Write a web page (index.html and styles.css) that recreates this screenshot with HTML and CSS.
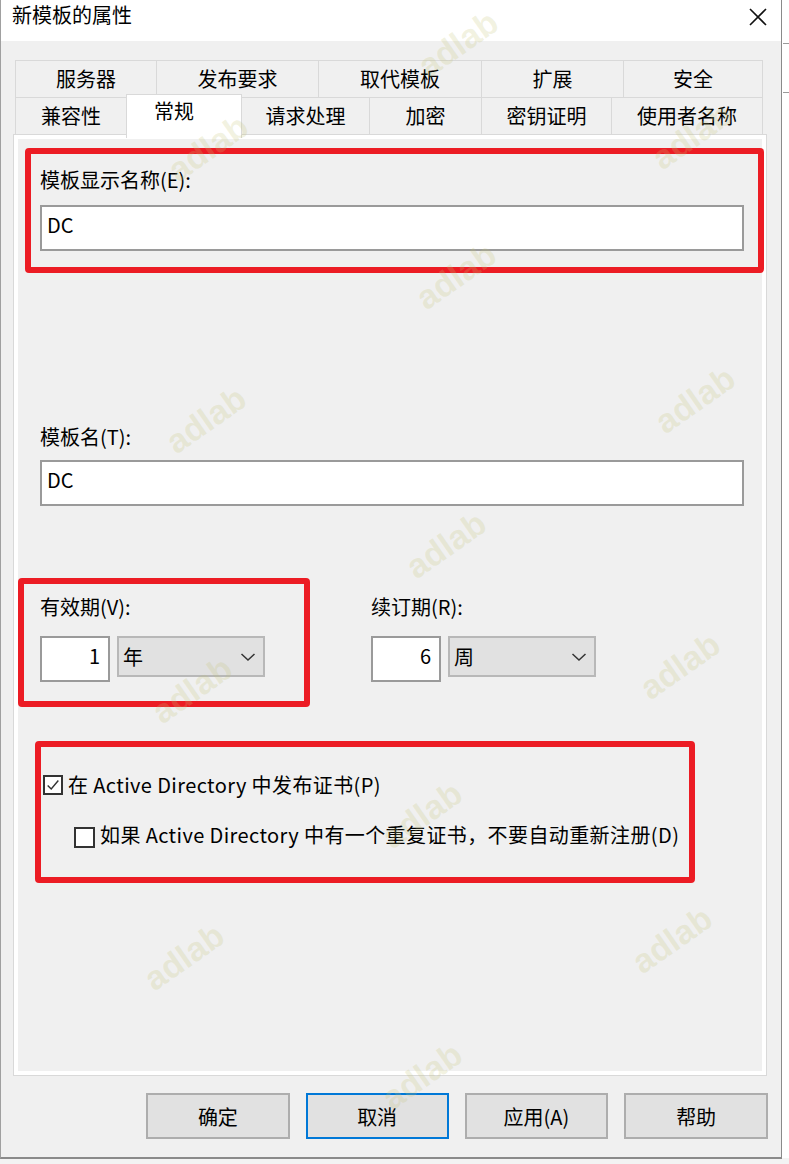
FILE: index.html
```html
<!DOCTYPE html>
<html lang="zh-CN">
<head>
<meta charset="utf-8">
<title>新模板的属性</title>
<link rel="stylesheet" href="styles.css">
</head>
<body>
<div class="screen">
  <div class="window">
    <div class="titlebar">
      <span class="title">新模板的属性</span>
      <svg class="close" width="20" height="18" viewBox="0 0 20 18"><path d="M2 1 L18 17 M18 1 L2 17" stroke="#111" stroke-width="1.6" fill="none"/></svg>
    </div>
    <div class="body">
      <div class="tabs">
        <div class="tabrow tabrow-top">
          <div class="tab">服务器</div>
          <div class="tab">发布要求</div>
          <div class="tab">取代模板</div>
          <div class="tab">扩展</div>
          <div class="tab">安全</div>
        </div>
        <div class="tabrow tabrow-bottom">
          <div class="tab">兼容性</div>
          <div class="tab tab-active">常规</div>
          <div class="tab">请求处理</div>
          <div class="tab">加密</div>
          <div class="tab">密钥证明</div>
          <div class="tab">使用者名称</div>
        </div>
      </div>
      <div class="panel">
        <div class="label label-first">模板显示名称(E):</div>
        <div class="textbox">DC</div>
        <div class="label label-second">模板名(T):</div>
        <div class="textbox textbox-second">DC</div>
        <div class="periods">
          <div class="period">
            <div class="label">有效期(V):</div>
            <div class="period-controls">
              <div class="numbox">1</div>
              <div class="combo"><span>年</span><svg width="16" height="10" viewBox="0 0 16 10"><path d="M1.5 2 L8 8 L14.5 2" stroke="#333" stroke-width="1.5" fill="none"/></svg></div>
            </div>
          </div>
          <div class="period period-right">
            <div class="label">续订期(R):</div>
            <div class="period-controls">
              <div class="numbox">6</div>
              <div class="combo"><span>周</span><svg width="16" height="10" viewBox="0 0 16 10"><path d="M1.5 2 L8 8 L14.5 2" stroke="#333" stroke-width="1.5" fill="none"/></svg></div>
            </div>
          </div>
        </div>
        <div class="check check-first">
          <span class="box"><svg width="18" height="18" viewBox="0 0 18 18"><path d="M3 9.5 L7 13.5 L15 4" stroke="#333" stroke-width="1.6" fill="none"/></svg></span>
          <span class="check-text">在 Active Directory 中发布证书(P)</span>
        </div>
        <div class="check check-second">
          <span class="box"></span>
          <span class="check-text">如果 Active Directory 中有一个重复证书，不要自动重新注册(D)</span>
        </div>
      </div>
      <div class="buttons">
        <div class="btn">确定</div>
        <div class="btn btn-focus">取消</div>
        <div class="btn">应用(A)</div>
        <div class="btn">帮助</div>
      </div>
    </div>
    <div class="redbox redbox-1"></div>
    <div class="redbox redbox-2"></div>
    <div class="redbox redbox-3"></div>
  </div>
  <div class="side">
    <div class="side-line side-line-1"></div>
    <div class="side-line side-line-2"></div>
  </div>
  <div class="watermarks">
    <span class="wm wm-1">adlab</span>
    <span class="wm wm-2">adlab</span>
    <span class="wm wm-3">adlab</span>
    <span class="wm wm-4">adlab</span>
    <span class="wm wm-5">adlab</span>
    <span class="wm wm-6">adlab</span>
    <span class="wm wm-7">adlab</span>
    <span class="wm wm-8">adlab</span>
    <span class="wm wm-9">adlab</span>
    <span class="wm wm-10">adlab</span>
    <span class="wm wm-11">adlab</span>
    <span class="wm wm-12">adlab</span>
    <span class="wm wm-13">adlab</span>
  </div>
</div>
</body>
</html>
```

FILE: styles.css
```css
* { box-sizing: border-box; }

html, body {
  margin: 0;
  padding: 0;
}

body {
  width: 789px;
  height: 1164px;
  overflow: hidden;
  background: #f3f3f3;
  font-family: "Noto Sans CJK SC", "Microsoft YaHei", sans-serif;
  color: #000;
}

.screen {
  position: relative;
  display: flex;
  width: 789px;
  height: 1164px;
}

.window {
  position: relative;
  width: 782px;
  height: 1159px;
  display: flex;
  flex-direction: column;
  background: #f0f0f0;
  border-left: 1px solid #a0a0a0;
  border-right: 1px solid #8a8a8a;
  border-bottom: 2px solid #8a8a8a;
  flex: none;
}

.titlebar {
  height: 41px;
  background: #fff;
  display: flex;
  justify-content: space-between;
  align-items: flex-start;
  padding: 2px 13px 0 11px;
  flex: none;
}

.title {
  font-size: 20px;
  line-height: 26px;
}

.close {
  margin-top: 6px;
}

.body {
  display: flex;
  flex-direction: column;
  padding: 19px 13px 0 12px;
}

.tabs {
  margin-left: 2px;
  width: 748px;
  display: flex;
  flex-direction: column;
}

.tabrow {
  display: grid;
  height: 37px;
}

.tabrow-top {
  grid-template-columns: 142px 162px 163px 142px 139px;
}

.tabrow-bottom {
  grid-template-columns: 112px 115px 128px 112px 130px 151px;
}

.tab {
  display: flex;
  justify-content: center;
  align-items: center;
  font-size: 20px;
  line-height: 24px;
  border: 1px solid #d9d9d9;
  border-bottom: none;
  border-left: none;
  background: #f0f0f0;
}

.tab:first-child {
  border-left: 1px solid #d9d9d9;
}

.tab-active {
  position: relative;
  z-index: 2;
  background: #fff;
  margin-top: -3px;
  margin-bottom: -4px;
  margin-left: -1px;
  border-left: 1px solid #d9d9d9;
  align-items: flex-start;
  padding-top: 4px;
  padding-right: 20px;
}

.panel {
  width: 754px;
  height: 942px;
  border: 1px solid #d9d9d9;
  box-shadow: inset 0 0 0 4px #fff;
  background: #f0f0f0;
  padding: 33px 0 0 26px;
  display: flex;
  flex-direction: column;
  align-items: flex-start;
}

.label {
  font-size: 20px;
  line-height: 24px;
  white-space: nowrap;
}

.textbox {
  width: 704px;
  height: 46px;
  margin-top: 13px;
  background: #fff;
  border: 2px solid #9a9a9a;
  font-size: 20px;
  line-height: 24px;
  padding: 6px 0 0 5px;
}

.label-second {
  margin-top: 174px;
}

.textbox-second {
  margin-top: 11px;
}

.periods {
  display: flex;
  margin-top: 89px;
  gap: 106px;
}

.period {
  display: flex;
  flex-direction: column;
}

.period-controls {
  display: flex;
  gap: 7px;
  margin-top: 17px;
  align-items: flex-start;
}

.numbox {
  width: 70px;
  height: 46px;
  background: #fff;
  border: 2px solid #9a9a9a;
  text-align: right;
  font-size: 20px;
  line-height: 24px;
  padding: 6px 8px 0 0;
}

.combo {
  width: 148px;
  height: 41px;
  background: #e1e1e1;
  border: 2px solid #b8b8b8;
  display: flex;
  justify-content: space-between;
  align-items: center;
  padding: 0 7px 0 4px;
  font-size: 20px;
}

.check {
  display: flex;
  align-items: center;
  font-size: 20px;
  line-height: 24px;
  letter-spacing: 0.4px;
  white-space: nowrap;
}

.check-first {
  margin-top: 91px;
  margin-left: 3px;
}

.check-second {
  margin-top: 25px;
  margin-left: 34px;
}

.box {
  width: 20px;
  height: 20px;
  background: #fff;
  border: 2px solid #333;
  display: flex;
  align-items: center;
  justify-content: center;
  margin-right: 5px;
}

.check-second .box {
  width: 21px;
  height: 21px;
  margin-top: 5px;
}

.buttons {
  display: flex;
  gap: 16px;
  margin-top: 17px;
  margin-left: 133px;
}

.btn {
  width: 144px;
  height: 46px;
  background: #e1e1e1;
  border: 2px solid #adadad;
  display: flex;
  justify-content: center;
  align-items: center;
  font-size: 20px;
}

.btn-focus {
  width: 143px;
  border-color: #0078d7;
}

.redbox {
  position: absolute;
  border: 6px solid #ec1c24;
  border-radius: 4px;
  z-index: 5;
}

.redbox-1 { left: 24px; top: 148px; width: 739px; height: 125px; }
.redbox-2 { left: 17px; top: 578px; width: 292px; height: 129px; }
.redbox-3 { left: 34px; top: 741px; width: 660px; height: 142px; }

.side {
  position: relative;
  flex: 1;
  height: 1158px;
  background: #fff;
}

.side-line {
  position: absolute;
  left: 1px;
  right: 0;
  height: 1px;
  background: #9a9a9a;
}

.side-line-1 { top: 43px; }
.side-line-2 { top: 92px; }

.watermarks {
  position: absolute;
  inset: 0;
  pointer-events: none;
  z-index: 10;
}

.wm {
  position: absolute;
  font-family: "Liberation Sans", Arial, sans-serif;
  font-weight: bold;
  font-size: 34px;
  color: rgba(196, 196, 120, 0.22);
  transform: translate(-50%, -50%) rotate(-35deg);
  white-space: nowrap;
}

.wm-1 { left: 458px; top: 44px; }
.wm-2 { left: 208px; top: 148px; }
.wm-3 { left: 692px; top: 136px; }
.wm-4 { left: 456px; top: 276px; }
.wm-5 { left: 206px; top: 420px; }
.wm-6 { left: 695px; top: 400px; }
.wm-7 { left: 446px; top: 545px; }
.wm-8 { left: 192px; top: 690px; }
.wm-9 { left: 680px; top: 666px; }
.wm-10 { left: 422px; top: 815px; }
.wm-11 { left: 184px; top: 957px; }
.wm-12 { left: 672px; top: 940px; }
.wm-13 { left: 422px; top: 1076px; }
```
